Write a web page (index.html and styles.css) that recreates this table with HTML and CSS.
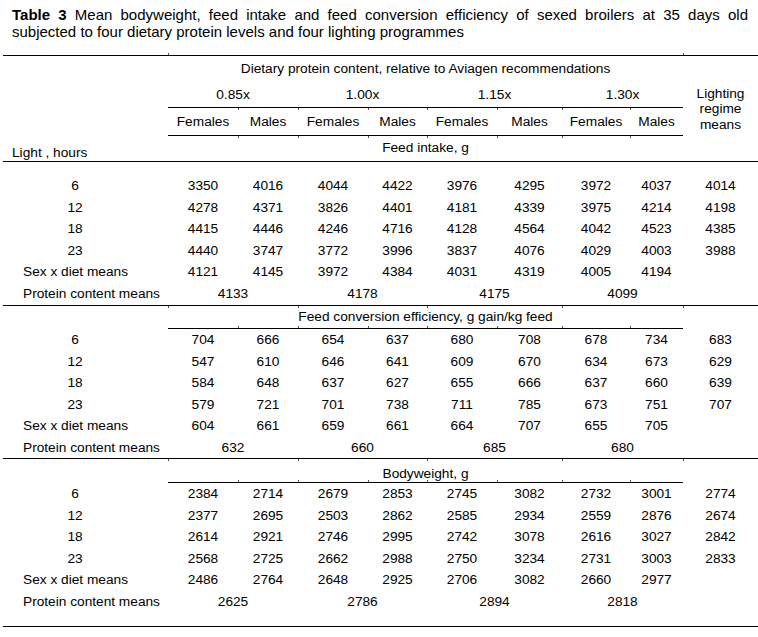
FILE: index.html
```html
<!DOCTYPE html>
<html lang="en">
<head>
<meta charset="utf-8">
<title>Table 3</title>
<link rel="stylesheet" href="styles.css">
</head>
<body>
<p class="caption"><span class="cap-line cap-first"><b>Table 3</b> Mean bodyweight, feed intake and feed conversion efficiency of sexed broilers at 35 days old</span><span class="cap-line">subjected to four dietary protein levels and four lighting programmes</span></p>
<table class="data">
  <colgroup>
    <col class="w-label">
    <col class="w70"><col class="w60"><col class="w70"><col class="w59">
    <col class="w70"><col class="w65"><col class="w68"><col class="w53">
    <col class="w75">
  </colgroup>
  <tbody>
    <tr class="r-a top">
      <td></td>
      <td colspan="8" class="t-up">Dietary protein content, relative to Aviagen recommendations</td>
      <td class="t-up"></td>
    </tr>
    <tr class="r-b">
      <td></td>
      <td colspan="2" class="ul">0.85x</td>
      <td colspan="2" class="ul">1.00x</td>
      <td colspan="2" class="ul">1.15x</td>
      <td colspan="2" class="ul">1.30x</td>
      <td rowspan="2" class="lrm">Lighting<br>regime<br>means</td>
    </tr>
    <tr class="r-c">
      <td></td>
      <td class="ul">Females</td><td class="ul t-in t-dn">Males</td>
      <td class="ul t-in t-dn">Females</td><td class="ul t-in t-dn">Males</td>
      <td class="ul t-in t-dn">Females</td><td class="ul t-in t-dn">Males</td>
      <td class="ul t-in t-dn">Females</td><td class="ul t-in t-dn">Males</td>
    </tr>
    <tr class="r-d bottom">
      <td class="lh">Light , hours</td>
      <td colspan="8" class="sec-top">Feed intake, g</td>
      <td></td>
    </tr>
    <tr class="spacer"><td colspan="10"></td></tr>
    <tr class="r22"><td class="hr">6</td><td>3350</td><td>4016</td><td>4044</td><td>4422</td><td>3976</td><td>4295</td><td>3972</td><td>4037</td><td>4014</td></tr>
    <tr class="r21"><td class="hr">12</td><td>4278</td><td>4371</td><td>3826</td><td>4401</td><td>4181</td><td>4339</td><td>3975</td><td>4214</td><td>4198</td></tr>
    <tr class="r22"><td class="hr">18</td><td>4415</td><td>4446</td><td>4246</td><td>4716</td><td>4128</td><td>4564</td><td>4042</td><td>4523</td><td>4385</td></tr>
    <tr class="r21"><td class="hr">23</td><td>4440</td><td>3747</td><td>3772</td><td>3996</td><td>3837</td><td>4076</td><td>4029</td><td>4003</td><td>3988</td></tr>
    <tr class="r22"><td class="lbl">Sex x diet means</td><td>4121</td><td>4145</td><td>3972</td><td>4384</td><td>4031</td><td>4319</td><td>4005</td><td>4194</td><td></td></tr>
    <tr class="r22"><td class="lbl">Protein content means</td><td colspan="2" class="t-dn">4133</td><td colspan="2" class="t-dn">4178</td><td colspan="2" class="t-dn">4175</td><td colspan="2" class="t-dn">4099</td><td class="t-dn"></td></tr>

    <tr class="r-sec top">
      <td></td>
      <td colspan="8" class="ul">Feed conversion efficiency, g gain/kg feed</td>
      <td></td>
    </tr>
    <tr class="r22"><td class="hr">6</td><td>704</td><td class="t-up">666</td><td class="t-up">654</td><td class="t-up">637</td><td class="t-up">680</td><td class="t-up">708</td><td class="t-up">678</td><td class="t-up">734</td><td>683</td></tr>
    <tr class="r21"><td class="hr">12</td><td>547</td><td>610</td><td>646</td><td>641</td><td>609</td><td>670</td><td>634</td><td>673</td><td>629</td></tr>
    <tr class="r22"><td class="hr">18</td><td>584</td><td>648</td><td>637</td><td>627</td><td>655</td><td>666</td><td>637</td><td>660</td><td>639</td></tr>
    <tr class="r21"><td class="hr">23</td><td>579</td><td>721</td><td>701</td><td>738</td><td>711</td><td>785</td><td>673</td><td>751</td><td>707</td></tr>
    <tr class="r22"><td class="lbl">Sex x diet means</td><td>604</td><td>661</td><td>659</td><td>661</td><td>664</td><td>707</td><td>655</td><td>705</td><td></td></tr>
    <tr class="r21"><td class="lbl">Protein content means</td><td colspan="2" class="t-dn">632</td><td colspan="2" class="t-dn">660</td><td colspan="2" class="t-dn">685</td><td colspan="2" class="t-dn">680</td><td class="t-dn"></td></tr>

    <tr class="r-sec2 top">
      <td></td>
      <td colspan="8" class="ul sec-low">Bodyweight, g</td>
      <td></td>
    </tr>
    <tr class="r22"><td class="hr">6</td><td>2384</td><td class="t-up">2714</td><td class="t-up">2679</td><td class="t-up">2853</td><td class="t-up">2745</td><td class="t-up">3082</td><td class="t-up">2732</td><td class="t-up">3001</td><td>2774</td></tr>
    <tr class="r21"><td class="hr">12</td><td>2377</td><td>2695</td><td>2503</td><td>2862</td><td>2585</td><td>2934</td><td>2559</td><td>2876</td><td>2674</td></tr>
    <tr class="r22"><td class="hr">18</td><td>2614</td><td>2921</td><td>2746</td><td>2995</td><td>2742</td><td>3078</td><td>2616</td><td>3027</td><td>2842</td></tr>
    <tr class="r21"><td class="hr">23</td><td>2568</td><td>2725</td><td>2662</td><td>2988</td><td>2750</td><td>3234</td><td>2731</td><td>3003</td><td>2833</td></tr>
    <tr class="r22"><td class="lbl">Sex x diet means</td><td>2486</td><td>2764</td><td>2648</td><td>2925</td><td>2706</td><td>3082</td><td>2660</td><td>2977</td><td></td></tr>
    <tr class="r22"><td class="lbl">Protein content means</td><td colspan="2">2625</td><td colspan="2">2786</td><td colspan="2">2894</td><td colspan="2">2818</td><td></td></tr>
    <tr class="spacer-end bottom">
      <td></td>
      <td colspan="2" class="t-dn"></td><td colspan="2" class="t-dn"></td>
      <td colspan="2" class="t-dn"></td><td colspan="2" class="t-dn"></td>
      <td class="t-dn"></td>
    </tr>
  </tbody>
</table>
</body>
</html>
```
FILE: styles.css
```css
html, body {
  margin: 0;
  padding: 0;
  background: #ffffff;
  color: #000000;
}

.caption {
  margin: 6px 10px 15px 12px;
  font-family: "Liberation Sans", Arial, sans-serif;
  font-size: 15px;
  line-height: 17px;
}

.cap-line {
  display: block;
}

.cap-first {
  text-align: justify;
  text-align-last: justify;
}

.data {
  margin-left: 3px;
  border-collapse: separate;
  border-spacing: 0;
  table-layout: fixed;
  width: 755px;
  font-family: "Liberation Sans", Arial, sans-serif;
  font-size: 13.7px;
  color: #000000;
}

.w-label { width: 165px; }
.w70 { width: 70px; }
.w60 { width: 60px; }
.w59 { width: 59px; }
.w65 { width: 65px; }
.w68 { width: 68px; }
.w53 { width: 53px; }
.w75 { width: 75px; }

.data td {
  position: relative;
  padding: 0;
  text-align: center;
  vertical-align: middle;
  white-space: nowrap;
  line-height: 16px;
}

.top td { border-top: 1px solid #000; }
.bottom td { border-bottom: 1px solid #000; }
.data td.ul { border-bottom: 1px solid #000; }

/* small rule ticks left by the column boundaries */
.data td.t-up::after,
.data td.t-dn::after,
.data td.t-in::before {
  content: "";
  position: absolute;
  left: 0;
  width: 1px;
  height: 2px;
  background: #555;
}
.data td.t-up::after { top: -3px; }
.data td.t-dn::after { bottom: -3px; }
.data td.t-in::before { top: 0; }

.r-a { height: 27px; }
.r-b { height: 26px; }
.r-c { height: 28px; }
.r-d { height: 26px; }
.spacer { height: 13px; }
.r22 { height: 22px; }
.r21 { height: 21px; }
.r-sec { height: 24px; }
.r-sec2 { height: 25px; }
.spacer-end { height: 14px; }

.data td.lrm {
  line-height: 15.5px;
  vertical-align: middle;
}

.data td.lh {
  text-align: left;
  padding-left: 9px;
  vertical-align: bottom;
}

.data td.sec-top {
  vertical-align: top;
  padding-top: 4px;
}

.data td.sec-low {
  vertical-align: bottom;
}

.data td.hr {
  padding-right: 21px;
}

.data td.lbl {
  text-align: left;
  padding-left: 20px;
}
```
